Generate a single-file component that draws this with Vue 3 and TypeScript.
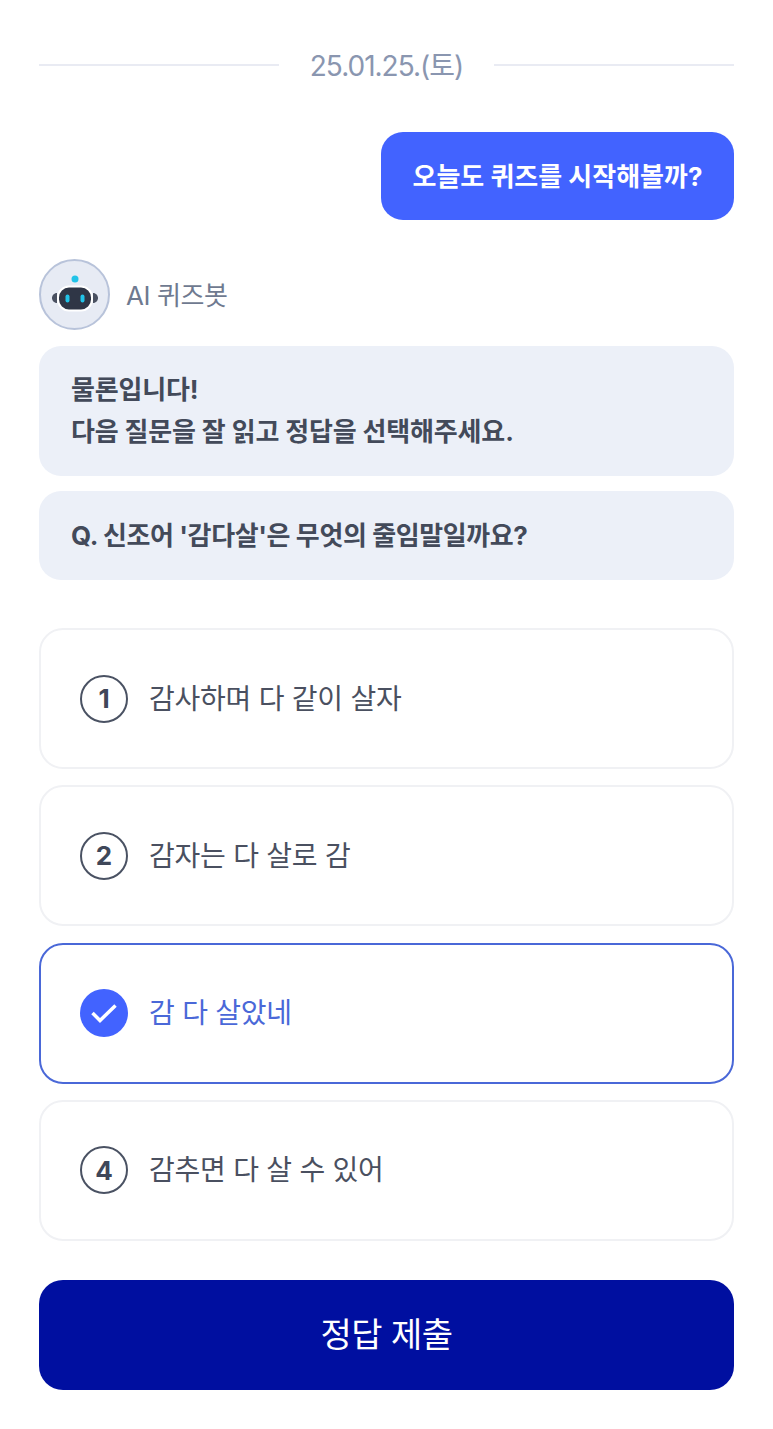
<script setup lang="ts">
const options = [
  { id: 1, text: '감사하며 다 같이 살자', selected: false },
  { id: 2, text: '감자는 다 살로 감', selected: false },
  { id: 3, text: '감 다 살았네', selected: true },
  { id: 4, text: '감추면 다 살 수 있어', selected: false },
]
</script>

<template>
  <main class="page">
    <div class="date-row">
      <span class="line"></span>
      <span class="date">25.01.25.(토)</span>
      <span class="line"></span>
    </div>

    <div class="user-row">
      <div class="user-bubble">오늘도 퀴즈를 시작해볼까?</div>
    </div>

    <div class="bot-head">
      <div class="avatar">
        <svg width="50" height="44" viewBox="0 0 50 44">
          <circle cx="25" cy="6" r="3.5" fill="#22c3e8" />
          <path d="M7 20c-3 0-5 2.500-5 5s2 5 5 5z" fill="#4a5161" />
          <path d="M43 20c3 0 5 2.500 5 5s-2 5-5 5z" fill="#4a5161" />
          <rect x="8" y="13.500" width="34" height="24" rx="11" fill="#2f3646" stroke="#fff" stroke-width="2" />
          <rect x="15.500" y="21.500" width="4" height="8" rx="2" fill="#22c3e8" />
          <rect x="30.500" y="21.500" width="4" height="8" rx="2" fill="#22c3e8" />
        </svg>
      </div>
      <span class="bot-name">AI 퀴즈봇</span>
    </div>

    <div class="bot-bubble first">물론입니다!<br />다음 질문을 잘 읽고 정답을 선택해주세요.</div>
    <div class="bot-bubble second">Q. 신조어 '감다살'은 무엇의 줄임말일까요?</div>

    <div class="options">
      <div v-for="o in options" :key="o.id" class="option" :class="{ selected: o.selected }">
        <span v-if="o.selected" class="badge checked">
          <svg width="26" height="20" viewBox="0 0 26 20">
            <path d="M1.500 10L9 17.500L24.500 2.500" fill="none" stroke="#fff" stroke-width="3.500" />
          </svg>
        </span>
        <span v-else class="badge">{{ o.id }}</span>
        <span class="option-text">{{ o.text }}</span>
      </div>
    </div>

    <button class="submit" type="button">정답 제출</button>
  </main>
</template>

<style>
html, body { margin: 0; background: #fff; }
</style>

<style scoped>
.page {
  box-sizing: border-box;
  width: 773px;
  height: 1429px;
  padding: 44px 39px 0 39px;
  font-family: Inter, "Noto Sans CJK KR", sans-serif;
  background: #fff;
  overflow: hidden;
}
.date-row {
  display: flex;
  align-items: center;
  gap: 31px;
  height: 42px;
}
.line { flex: 1; height: 2px; background: #e9ebf3; }
.date { font-size: 28px; color: #8a96b0; letter-spacing: -1px; padding-bottom: 3px; }
.user-row { display: flex; justify-content: flex-end; margin-top: 46px; }
.user-bubble {
  box-sizing: border-box;
  width: 353px;
  height: 88px;
  padding-bottom: 4px;
  display: flex;
  align-items: center;
  justify-content: center;
  border-radius: 22px;
  background: #4263ff;
  color: #fff;
  font-size: 26px;
  font-weight: 700;
  letter-spacing: 0;
}
.bot-head { display: flex; align-items: center; gap: 16px; margin-top: 39px; }
.avatar {
  box-sizing: border-box;
  width: 71px;
  height: 71px;
  border-radius: 50%;
  background: #e7ebf4;
  border: 2px solid #b8c3da;
  display: flex;
  align-items: center;
  justify-content: center;
}
.bot-name { font-size: 26px; color: #6f7a90; letter-spacing: -0.4px; padding-bottom: 2px; }
.bot-bubble {
  box-sizing: border-box;
  background: #ecf0f8;
  border-radius: 22px;
  padding: 0 32px;
  color: #434a5a;
  font-size: 26px;
  font-weight: 700;
  letter-spacing: -0.15px;
  display: flex;
  flex-direction: column;
  justify-content: center;
}
.first { height: 130px; margin-top: 16px; line-height: 42px; display: block; padding-top: 23px; }
.second { height: 89px; margin-top: 15px; padding-bottom: 4px; letter-spacing: -0.4px; }
.options { display: flex; flex-direction: column; gap: 16.33px; margin-top: 48px; }
.option {
  box-sizing: border-box;
  height: 141px;
  border: 2px solid #f0f1f4;
  border-radius: 24px;
  display: flex;
  align-items: center;
  gap: 21px;
  padding-left: 39px;
  background: #fff;
}
.option.selected { border-color: #4a68d8; }
.badge {
  box-sizing: border-box;
  width: 48px;
  height: 48px;
  border-radius: 50%;
  border: 2px solid #4a5263;
  color: #3f4759;
  font-size: 26px;
  font-weight: 700;
  display: flex;
  align-items: center;
  justify-content: center;
}
.badge.checked { background: #4263ff; border: none; }
.option-text { font-size: 28px; color: #4a5060; letter-spacing: -0.25px; padding-bottom: 4px; }
.selected .option-text { color: #4a68d8; }
.submit {
  display: block;
  width: 100%;
  height: 110px;
  padding: 0 0 4px;
  margin-top: 39px;
  border: none;
  border-radius: 24px;
  background: #000fa0;
  color: #fff;
  font-family: inherit;
  font-size: 34px;
  font-weight: 400;
  letter-spacing: -0.5px;
}
</style>
